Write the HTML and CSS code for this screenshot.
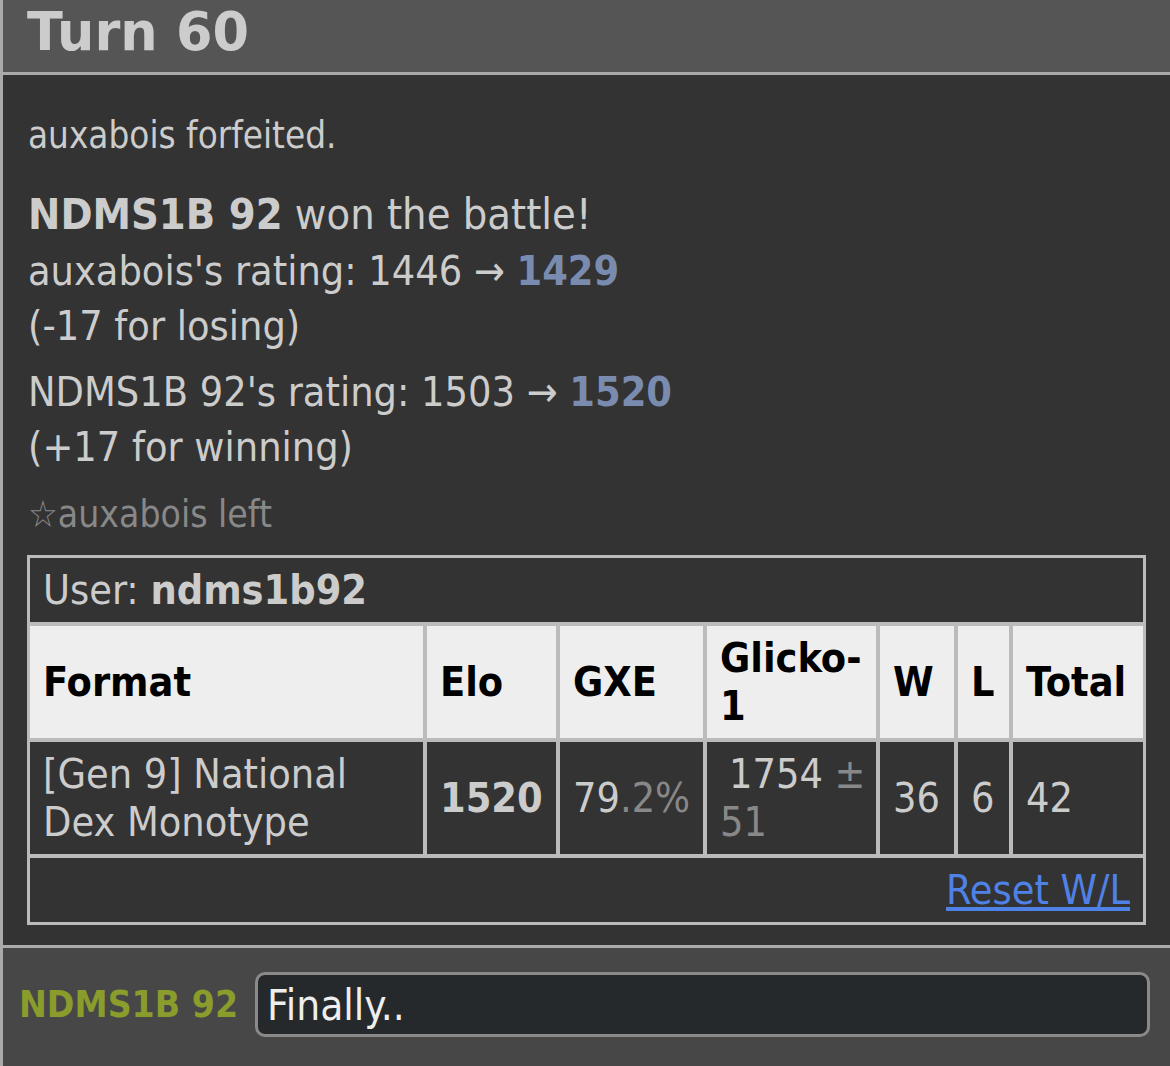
FILE: index.html
```html
<!DOCTYPE html>
<html>
<head>
<meta charset="utf-8">
<link rel="stylesheet" href="styles.css">
</head>
<body>
<div class="log">
  <h2 class="turn">Turn 60</h2>
  <div class="history">
    <div class="forfeit">auxabois forfeited.</div>
    <div class="win"><strong>NDMS1B 92</strong> won the battle!</div>
    <div class="rating">auxabois's rating: 1446 → <strong class="elo">1429</strong><br>(-17 for losing)</div>
    <div class="rating">NDMS1B 92's rating: 1503 → <strong class="elo">1520</strong><br>(+17 for winning)</div>
    <div class="leave">☆auxabois left</div>
    <table class="ladder">
      <colgroup>
        <col class="c1"><col class="c2"><col class="c3"><col class="c4"><col class="c5"><col class="c6"><col class="c7">
      </colgroup>
      <tr><th colspan="7" class="user">User: <strong>ndms1b92</strong></th></tr>
      <tr class="head"><th>Format</th><th>Elo</th><th>GXE</th><th>Glicko-1</th><th>W</th><th>L</th><th>Total</th></tr>
      <tr class="data">
        <td>[Gen 9] National Dex Monotype</td>
        <td><strong>1520</strong></td>
        <td>79<span class="dim">.2%</span></td>
        <td class="glicko"><span class="ind">1754</span>&nbsp;<span class="dim">±</span> <span class="dim">51</span></td>
        <td>36</td>
        <td>6</td>
        <td>42</td>
      </tr>
      <tr><td colspan="7" class="reset"><a href="#">Reset W/L</a></td></tr>
    </table>
  </div>
  <div class="chatbar">
    <strong class="name">NDMS1B 92</strong>
    <div class="chatbox">Finally..</div>
  </div>
</div>
</body>
</html>
```
FILE: styles.css
```css
html, body {
  margin: 0;
  padding: 0;
  background: #333;
}
body {
  font-family: "DejaVu Sans Condensed", "DejaVu Sans", sans-serif;
  font-stretch: condensed;
  color: #ccc;
}
.log {
  border-left: 3px solid #aaa;
  min-height: 1066px;
  background: #333;
}
.turn {
  margin: 0;
  height: 72px;
  background: #555;
  border-bottom: 3px solid #aaa;
  color: #ccc;
  font-family: "DejaVu Sans", sans-serif;
  font-stretch: normal;
  font-size: 52.5px;
  font-weight: bold;
  line-height: 63px;
  padding-left: 24px;
}
.history {
  padding: 33px 24px 20px 24px;
}
.forfeit {
  font-size: 36.5px;
  line-height: 55px;
  padding-left: 1px;
}
.win {
  font-size: 43px;
  line-height: 55px;
  margin-top: 24px;
  padding-left: 1px;
}
.rating {
  font-size: 41px;
  line-height: 55px;
  margin-top: 2px;
  padding-left: 1px;
}
.rating + .rating {
  margin-top: 11px;
}
.elo {
  color: #7a8bb0;
}
.leave {
  font-size: 37px;
  line-height: 55px;
  margin-top: 12px;
  color: #888;
  padding-left: 1px;
}
.ladder {
  margin-top: 13px;
  width: 100%;
  table-layout: fixed;
  border-collapse: separate;
  border-spacing: 0;
  border: 1px solid #bbb;
  font-size: 41px;
  line-height: 48px;
}
.c1 { width: 397px; }
.c2 { width: 133px; }
.c3 { width: 147px; }
.c4 { width: 173px; }
.c5 { width: 78px; }
.c6 { width: 55px; }
.c7 { width: 134px; }
.ladder th, .ladder td {
  border: 2px solid #bbb;
  padding: 8px 13px;
  text-align: left;
  vertical-align: middle;
}
.ladder th.user {
  background: #333;
  color: #ccc;
  font-weight: normal;
}
.head th {
  background: #eee;
  color: #000;
  font-weight: bold;
}
.data td {
  background: #333;
  color: #ccc;
}
.ladder td.glicko {
  padding-right: 4px;
}
.dim {
  color: #888;
}
.ind {
  padding-left: 9px;
}
.ladder td.reset {
  text-align: right;
}
.reset a {
  color: #4f82e6;
  text-decoration: underline;
}
.chatbar {
  border-top: 3px solid #aaa;
  background: #474747;
  padding: 24px 20px 30px 16px;
  display: flex;
  align-items: center;
  gap: 17px;
}
.name {
  color: #8a9c2b;
  font-size: 37px;
  white-space: nowrap;
}
.chatbox {
  flex: 1;
  height: 59px;
  border: 3px solid #8a8a8a;
  border-radius: 10px;
  background: #26292c;
  color: #eee;
  font-size: 42px;
  line-height: 62px;
  padding-left: 9px;
}
```
